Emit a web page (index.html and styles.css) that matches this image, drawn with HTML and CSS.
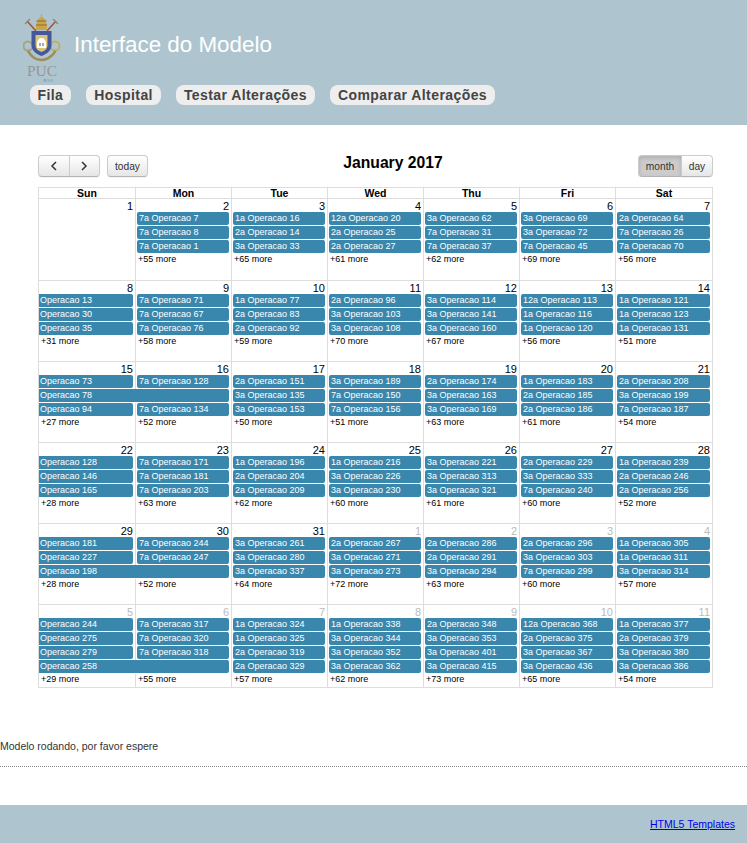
FILE: index.html
```html
<!DOCTYPE html>
<html lang="en">
<head>
    <meta charset="UTF-8">
    <title>Interface do Modelo</title>
    <link rel="stylesheet" href="styles.css">
</head>
<body>
    <header class="site-header">
        <div class="brand">
            <svg class="logo" width="38" height="69" viewBox="23 13 38 69">
                <g class="crest">
                    <!-- keys -->
                    <path d="M27 21l9 10M56 21l-9 10" stroke="#a4543c" stroke-width="1.6" fill="none"/>
                    <path d="M25 24l5-5M58 24l-5-5" stroke="#8a8a70" stroke-width="1.4" fill="none"/>
                    <!-- tiara -->
                    <path d="M41.500 14c1 1 1 2 .5 3 3 1 5 5 5 13h-11c0-8 2-12 5-13-.5-1-.5-2 .5-3z" fill="#cda448"/>
                    <path d="M36.500 21h10M36 25h11" stroke="#8f6d2c" stroke-width="1"/>
                    <!-- scrolls -->
                    <circle cx="28" cy="46" r="4.500" fill="none" stroke="#a9a27c" stroke-width="2"/>
                    <circle cx="55" cy="46" r="4.500" fill="none" stroke="#c0ae68" stroke-width="2"/>
                    <path d="M28 51c4 7 10 9 13.500 9s10-2 14-9" fill="none" stroke="#a08c50" stroke-width="2.500"/>
                    <!-- shield -->
                    <path d="M31.500 31h20v14c0 6-5 9-10 11-5-2-10-5-10-11z" fill="#44589c"/>
                    <path d="M35.500 35h12v10c0 4-3 6-6 7-3-1-6-3-6-7z" fill="#d9c377"/>
                    <!-- building -->
                    <path d="M37 48v-5c0-3 2-5 4.500-5s4.500 2 4.500 5v5z" fill="#fff"/>
                    <path d="M39.500 43h1v3h-1zM42.500 43h1v3h-1z" fill="#555"/>
                </g>
                <text class="logo-puc" x="27" y="75.500">PUC</text>
                <text class="logo-rio" x="43.500" y="81.500">RIO</text>
            </svg>
            <h1 class="site-title">Interface do Modelo</h1>
        </div>
        <nav class="main-nav">
            <a class="nav-link">Fila</a>
            <a class="nav-link">Hospital</a>
            <a class="nav-link">Testar Alterações</a>
            <a class="nav-link">Comparar Alterações</a>
        </nav>
    </header>

    <main class="content">
        <div class="calendar">
            <div class="toolbar">
                <div class="btn-row">
                    <div class="btn-group">
                        <button class="btn btn-arrow"><svg width="8" height="10" viewBox="0 0 8 10"><path d="M6 1L2 5l4 4" fill="none" stroke="#333" stroke-width="1.500"/></svg></button>
                        <button class="btn btn-arrow"><svg width="8" height="10" viewBox="0 0 8 10"><path d="M2 1l4 4-4 4" fill="none" stroke="#333" stroke-width="1.500"/></svg></button>
                    </div>
                    <button class="btn btn-solo">today</button>
                </div>
                <h2 class="month-title">January 2017</h2>
                <div class="btn-group">
                    <button class="btn btn-active">month</button>
                    <button class="btn">day</button>
                </div>
            </div>

            <div class="grid">
                <div class="week-head">
                    <div>Sun</div><div>Mon</div><div>Tue</div><div>Wed</div><div>Thu</div><div>Fri</div><div>Sat</div>
                </div>

                <div class="week week-first">
                    <div class="cell num">1</div><div class="cell num">2</div><div class="cell num">3</div><div class="cell num">4</div><div class="cell num">5</div><div class="cell num">6</div><div class="cell num">7</div>
                    <div class="cell"></div><div class="cell"><div class="ev">7a Operacao 7</div></div><div class="cell"><div class="ev">1a Operacao 16</div></div><div class="cell"><div class="ev">12a Operacao 20</div></div><div class="cell"><div class="ev">3a Operacao 62</div></div><div class="cell"><div class="ev">3a Operacao 69</div></div><div class="cell"><div class="ev">2a Operacao 64</div></div>
                    <div class="cell"></div><div class="cell"><div class="ev">7a Operacao 8</div></div><div class="cell"><div class="ev">2a Operacao 14</div></div><div class="cell"><div class="ev">2a Operacao 25</div></div><div class="cell"><div class="ev">7a Operacao 31</div></div><div class="cell"><div class="ev">3a Operacao 72</div></div><div class="cell"><div class="ev">7a Operacao 26</div></div>
                    <div class="cell"></div><div class="cell"><div class="ev">7a Operacao 1</div></div><div class="cell"><div class="ev">3a Operacao 33</div></div><div class="cell"><div class="ev">2a Operacao 27</div></div><div class="cell"><div class="ev">7a Operacao 37</div></div><div class="cell"><div class="ev">7a Operacao 45</div></div><div class="cell"><div class="ev">7a Operacao 70</div></div>
                    <div class="cell"></div><div class="cell more">+55 more</div><div class="cell more">+65 more</div><div class="cell more">+61 more</div><div class="cell more">+62 more</div><div class="cell more">+69 more</div><div class="cell more">+56 more</div>
                </div>

                <div class="week">
                    <div class="cell num">8</div><div class="cell num">9</div><div class="cell num">10</div><div class="cell num">11</div><div class="cell num">12</div><div class="cell num">13</div><div class="cell num">14</div>
                    <div class="cell"><div class="ev cont">Operacao 13</div></div><div class="cell"><div class="ev">7a Operacao 71</div></div><div class="cell"><div class="ev">1a Operacao 77</div></div><div class="cell"><div class="ev">2a Operacao 96</div></div><div class="cell"><div class="ev">3a Operacao 114</div></div><div class="cell"><div class="ev">12a Operacao 113</div></div><div class="cell"><div class="ev">1a Operacao 121</div></div>
                    <div class="cell"><div class="ev cont">Operacao 30</div></div><div class="cell"><div class="ev">7a Operacao 67</div></div><div class="cell"><div class="ev">2a Operacao 83</div></div><div class="cell"><div class="ev">3a Operacao 103</div></div><div class="cell"><div class="ev">3a Operacao 141</div></div><div class="cell"><div class="ev">1a Operacao 116</div></div><div class="cell"><div class="ev">1a Operacao 123</div></div>
                    <div class="cell"><div class="ev cont">Operacao 35</div></div><div class="cell"><div class="ev">7a Operacao 76</div></div><div class="cell"><div class="ev">2a Operacao 92</div></div><div class="cell"><div class="ev">3a Operacao 108</div></div><div class="cell"><div class="ev">3a Operacao 160</div></div><div class="cell"><div class="ev">1a Operacao 120</div></div><div class="cell"><div class="ev">1a Operacao 131</div></div>
                    <div class="cell more">+31 more</div><div class="cell more">+58 more</div><div class="cell more">+59 more</div><div class="cell more">+70 more</div><div class="cell more">+67 more</div><div class="cell more">+56 more</div><div class="cell more">+51 more</div>
                </div>

                <div class="week">
                    <div class="cell num">15</div><div class="cell num">16</div><div class="cell num">17</div><div class="cell num">18</div><div class="cell num">19</div><div class="cell num">20</div><div class="cell num">21</div>
                    <div class="cell"><div class="ev cont">Operacao 73</div></div><div class="cell"><div class="ev">7a Operacao 128</div></div><div class="cell"><div class="ev">2a Operacao 151</div></div><div class="cell"><div class="ev">3a Operacao 189</div></div><div class="cell"><div class="ev">2a Operacao 174</div></div><div class="cell"><div class="ev">1a Operacao 183</div></div><div class="cell"><div class="ev">2a Operacao 208</div></div>
                    <div class="cell span-2"><div class="ev cont">Operacao 78</div></div><div class="cell"><div class="ev">3a Operacao 135</div></div><div class="cell"><div class="ev">7a Operacao 150</div></div><div class="cell"><div class="ev">3a Operacao 163</div></div><div class="cell"><div class="ev">2a Operacao 185</div></div><div class="cell"><div class="ev">3a Operacao 199</div></div>
                    <div class="cell"><div class="ev cont">Operacao 94</div></div><div class="cell"><div class="ev">7a Operacao 134</div></div><div class="cell"><div class="ev">3a Operacao 153</div></div><div class="cell"><div class="ev">7a Operacao 156</div></div><div class="cell"><div class="ev">3a Operacao 169</div></div><div class="cell"><div class="ev">2a Operacao 186</div></div><div class="cell"><div class="ev">7a Operacao 187</div></div>
                    <div class="cell more">+27 more</div><div class="cell more">+52 more</div><div class="cell more">+50 more</div><div class="cell more">+51 more</div><div class="cell more">+63 more</div><div class="cell more">+61 more</div><div class="cell more">+54 more</div>
                </div>

                <div class="week">
                    <div class="cell num">22</div><div class="cell num">23</div><div class="cell num">24</div><div class="cell num">25</div><div class="cell num">26</div><div class="cell num">27</div><div class="cell num">28</div>
                    <div class="cell"><div class="ev cont">Operacao 128</div></div><div class="cell"><div class="ev">7a Operacao 171</div></div><div class="cell"><div class="ev">1a Operacao 196</div></div><div class="cell"><div class="ev">1a Operacao 216</div></div><div class="cell"><div class="ev">3a Operacao 221</div></div><div class="cell"><div class="ev">2a Operacao 229</div></div><div class="cell"><div class="ev">1a Operacao 239</div></div>
                    <div class="cell"><div class="ev cont">Operacao 146</div></div><div class="cell"><div class="ev">7a Operacao 181</div></div><div class="cell"><div class="ev">2a Operacao 204</div></div><div class="cell"><div class="ev">3a Operacao 226</div></div><div class="cell"><div class="ev">3a Operacao 313</div></div><div class="cell"><div class="ev">3a Operacao 333</div></div><div class="cell"><div class="ev">2a Operacao 246</div></div>
                    <div class="cell"><div class="ev cont">Operacao 165</div></div><div class="cell"><div class="ev">7a Operacao 203</div></div><div class="cell"><div class="ev">2a Operacao 209</div></div><div class="cell"><div class="ev">3a Operacao 230</div></div><div class="cell"><div class="ev">3a Operacao 321</div></div><div class="cell"><div class="ev">7a Operacao 240</div></div><div class="cell"><div class="ev">2a Operacao 256</div></div>
                    <div class="cell more">+28 more</div><div class="cell more">+63 more</div><div class="cell more">+62 more</div><div class="cell more">+60 more</div><div class="cell more">+61 more</div><div class="cell more">+60 more</div><div class="cell more">+52 more</div>
                </div>

                <div class="week">
                    <div class="cell num">29</div><div class="cell num">30</div><div class="cell num">31</div><div class="cell num other">1</div><div class="cell num other">2</div><div class="cell num other">3</div><div class="cell num other">4</div>
                    <div class="cell"><div class="ev cont">Operacao 181</div></div><div class="cell"><div class="ev">7a Operacao 244</div></div><div class="cell"><div class="ev">3a Operacao 261</div></div><div class="cell"><div class="ev">2a Operacao 267</div></div><div class="cell"><div class="ev">2a Operacao 286</div></div><div class="cell"><div class="ev">2a Operacao 296</div></div><div class="cell"><div class="ev">1a Operacao 305</div></div>
                    <div class="cell"><div class="ev cont">Operacao 227</div></div><div class="cell"><div class="ev">7a Operacao 247</div></div><div class="cell"><div class="ev">3a Operacao 280</div></div><div class="cell"><div class="ev">3a Operacao 271</div></div><div class="cell"><div class="ev">2a Operacao 291</div></div><div class="cell"><div class="ev">3a Operacao 303</div></div><div class="cell"><div class="ev">1a Operacao 311</div></div>
                    <div class="cell span-2"><div class="ev cont">Operacao 198</div></div><div class="cell"><div class="ev">3a Operacao 337</div></div><div class="cell"><div class="ev">3a Operacao 273</div></div><div class="cell"><div class="ev">3a Operacao 294</div></div><div class="cell"><div class="ev">7a Operacao 299</div></div><div class="cell"><div class="ev">3a Operacao 314</div></div>
                    <div class="cell more">+28 more</div><div class="cell more">+52 more</div><div class="cell more">+64 more</div><div class="cell more">+72 more</div><div class="cell more">+63 more</div><div class="cell more">+60 more</div><div class="cell more">+57 more</div>
                </div>

                <div class="week week-last">
                    <div class="cell num other">5</div><div class="cell num other">6</div><div class="cell num other">7</div><div class="cell num other">8</div><div class="cell num other">9</div><div class="cell num other">10</div><div class="cell num other">11</div>
                    <div class="cell"><div class="ev cont">Operacao 244</div></div><div class="cell"><div class="ev">7a Operacao 317</div></div><div class="cell"><div class="ev">1a Operacao 324</div></div><div class="cell"><div class="ev">1a Operacao 338</div></div><div class="cell"><div class="ev">2a Operacao 348</div></div><div class="cell"><div class="ev">12a Operacao 368</div></div><div class="cell"><div class="ev">1a Operacao 377</div></div>
                    <div class="cell"><div class="ev cont">Operacao 275</div></div><div class="cell"><div class="ev">7a Operacao 320</div></div><div class="cell"><div class="ev">1a Operacao 325</div></div><div class="cell"><div class="ev">3a Operacao 344</div></div><div class="cell"><div class="ev">3a Operacao 353</div></div><div class="cell"><div class="ev">2a Operacao 375</div></div><div class="cell"><div class="ev">2a Operacao 379</div></div>
                    <div class="cell"><div class="ev cont">Operacao 279</div></div><div class="cell"><div class="ev">7a Operacao 318</div></div><div class="cell"><div class="ev">2a Operacao 319</div></div><div class="cell"><div class="ev">3a Operacao 352</div></div><div class="cell"><div class="ev">3a Operacao 401</div></div><div class="cell"><div class="ev">3a Operacao 367</div></div><div class="cell"><div class="ev">3a Operacao 380</div></div>
                    <div class="cell span-2"><div class="ev cont">Operacao 258</div></div><div class="cell"><div class="ev">2a Operacao 329</div></div><div class="cell"><div class="ev">3a Operacao 362</div></div><div class="cell"><div class="ev">3a Operacao 415</div></div><div class="cell"><div class="ev">3a Operacao 436</div></div><div class="cell"><div class="ev">3a Operacao 386</div></div>
                    <div class="cell more">+29 more</div><div class="cell more">+55 more</div><div class="cell more">+57 more</div><div class="cell more">+62 more</div><div class="cell more">+73 more</div><div class="cell more">+65 more</div><div class="cell more">+54 more</div>
                </div>
            </div>
        </div>

        <p class="status">Modelo rodando, por favor espere</p>
    </main>

    <footer class="site-footer">
        <a href="#">HTML5 Templates</a>
    </footer>
</body>
</html>
```

FILE: styles.css
```css
* {
    margin: 0;
    padding: 0;
    box-sizing: border-box;
}

body {
    font-family: "Liberation Sans", Arial, sans-serif;
    background: #fff;
    color: #000;
}

/* header */
.site-header {
    height: 125px;
    background: #aec5cf;
    padding: 13px 0 0 23px;
}

.brand {
    display: flex;
    align-items: center;
    gap: 13px;
    height: 68px;
}

.logo {
    flex: none;
    align-self: flex-start;
}

.crest {
    filter: blur(0.35px);
}

.logo-puc {
    font-family: "Liberation Serif", serif;
    font-size: 15.500px;
    fill: #97968f;
}

.logo-rio {
    font-family: "Liberation Sans", sans-serif;
    font-size: 4px;
    letter-spacing: 1px;
    fill: #6a75a8;
}

.site-title {
    font-size: 22.400px;
    font-weight: normal;
    color: #fff;
    margin-bottom: 4px;
}

.main-nav {
    display: flex;
    gap: 15px;
    margin: 4px 0 0 6.500px;
}

.nav-link {
    height: 20px;
    line-height: 20px;
    padding: 0 8px;
    background: #eee;
    border-radius: 8px;
    color: #444;
    font-size: 14px;
    font-weight: bold;
    letter-spacing: 0.42px;
}

/* calendar */
.content {
    padding-top: 30px;
}

.calendar {
    width: 675px;
    margin-left: 38px;
}

.toolbar {
    display: flex;
    justify-content: space-between;
    align-items: flex-start;
    margin-bottom: 10px;
}

.btn-row {
    display: flex;
    gap: 7px;
}

.btn-group {
    display: flex;
}

.btn {
    height: 22px;
    padding: 0 7px;
    font-family: inherit;
    font-size: 10.200px;
    color: #333;
    background: linear-gradient(#fff, #e6e6e6);
    border: 1px solid #ccc;
    border-bottom-color: #b3b3b3;
    box-shadow: 0 1px 1px rgba(0, 0, 0, 0.05);
}

.btn-group .btn:first-child {
    border-radius: 4px 0 0 4px;
}

.btn-group .btn:last-child {
    border-radius: 0 4px 4px 0;
    margin-left: -1px;
}

.btn-solo {
    width: 41px;
    padding: 0;
    border-radius: 4px;
}

.btn-arrow {
    width: 31.500px;
    padding: 0;
    display: flex;
    align-items: center;
    justify-content: center;
}

.btn-active {
    width: 44px;
    padding: 0;
    background: #ccc;
    box-shadow: inset 0 2px 4px rgba(0, 0, 0, 0.15);
}

.btn-active + .btn {
    width: 32px;
    padding: 0;
}

.month-title {
    font-size: 15.700px;
    line-height: 16px;
}

.grid {
    border: 1px solid #ddd;
    border-left: 0;
    width: 675px;
}

.week-head,
.week {
    display: grid;
    grid-template-columns: 97px repeat(5, 96px) 97px;
    width: 674px;
}

.week-head div {
    height: 10px;
    line-height: 11px;
    border-left: 1px solid #ddd;
    font-size: 10.500px;
    font-weight: bold;
    text-align: center;
}

.week {
    height: 81px;
    border-top: 1px solid #ddd;
    grid-template-rows: 13px repeat(3, 14px) 1fr;
}

.week-first {
    height: 82px;
}

.week-last {
    height: 83px;
    grid-template-rows: 13px repeat(4, 14px) 1fr;
}

.cell {
    border-left: 1px solid #ddd;
    min-width: 0;
}

.span-2 {
    grid-column: span 2;
}

.num {
    padding-right: 2px;
    font-size: 11px;
    line-height: 14px;
    text-align: right;
}

.num.other {
    color: #bbb;
}

.ev {
    height: 13px;
    margin: 0 2px 1px 1px;
    padding: 0 2px;
    background: #3a87ad;
    border-radius: 2px;
    color: #fff;
    font-size: 9px;
    line-height: 13px;
    white-space: nowrap;
    overflow: hidden;
}

.ev.cont {
    margin-left: 0;
    padding-left: 1px;
    border-radius: 0 2px 2px 0;
}

.more {
    padding-left: 2px;
    font-size: 9px;
    line-height: 11px;
}

/* status and footer */
.status {
    margin-top: 52px;
    height: 27px;
    font-size: 10.500px;
    line-height: 12px;
    color: #333;
    border-bottom: 1px dotted #888;
}

.site-footer {
    margin-top: 38px;
    height: 38px;
    padding: 13px 12px 0 0;
    background: #aec5cf;
    font-size: 10.500px;
    text-align: right;
}

.site-footer a {
    color: #00e;
}
```
